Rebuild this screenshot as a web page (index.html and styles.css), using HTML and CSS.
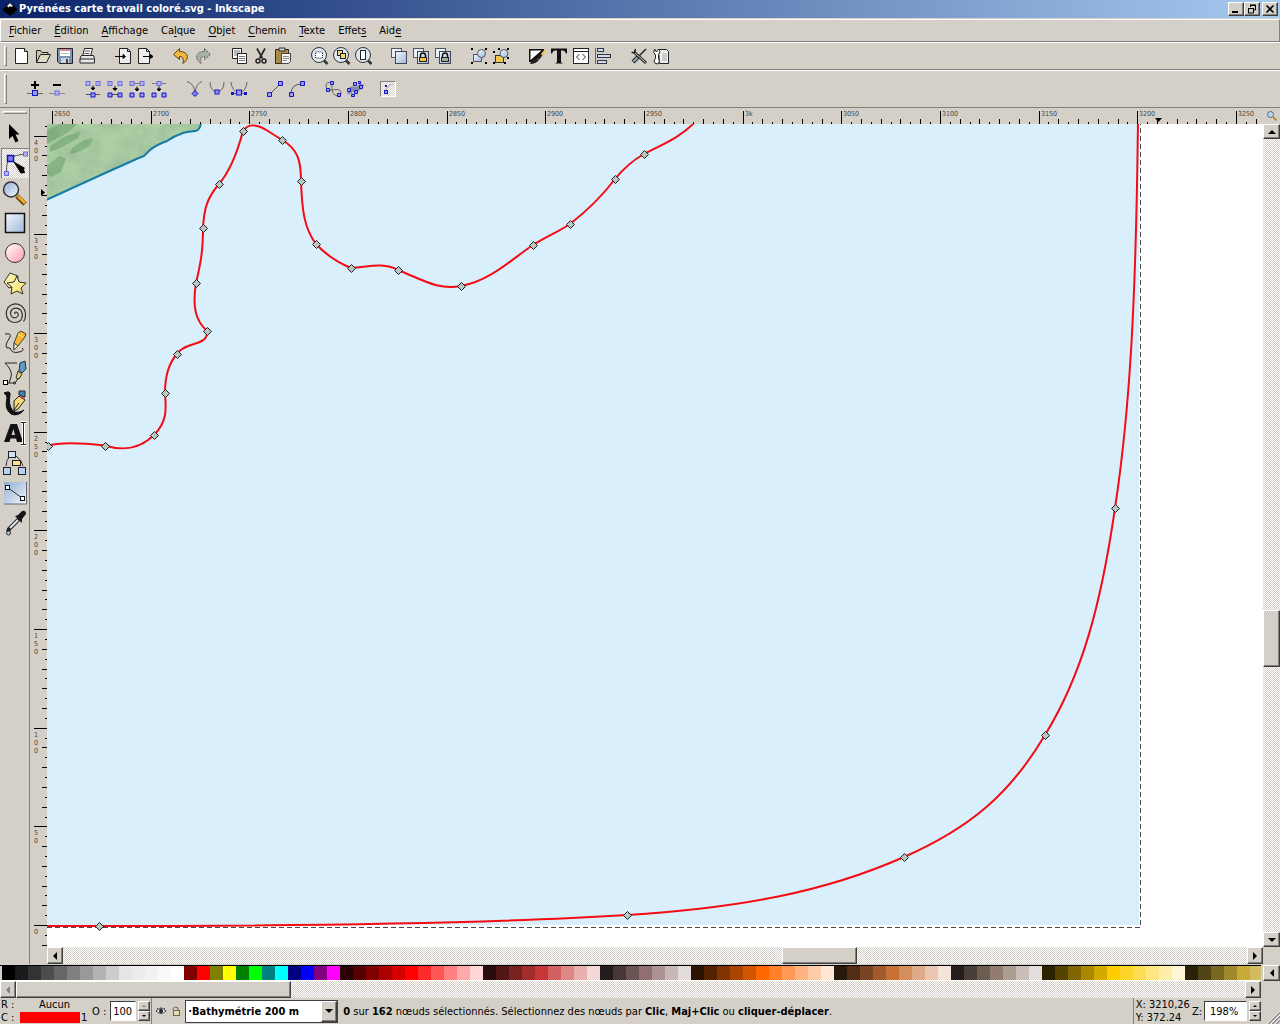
FILE: index.html
```html
<!DOCTYPE html>
<html lang="fr">
<head>
<meta charset="utf-8">
<title>Pyrénées carte travail coloré.svg - Inkscape</title>
<link rel="stylesheet" href="styles.css">
</head>
<body>
<svg class="defs" aria-hidden="true">
  <defs>
    <linearGradient id="blue" x1="0" y1="0" x2="1" y2="1"><stop offset="0" stop-color="#f4f8fd"/><stop offset="1" stop-color="#9db9da"/></linearGradient>
    <linearGradient id="steel" x1="0" y1="0" x2="1" y2="1"><stop offset="0" stop-color="#8faed4"/><stop offset="1" stop-color="#f4f8fd"/></linearGradient>
    <linearGradient id="pink" x1="0" y1="0" x2="1" y2="1"><stop offset="0" stop-color="#fff"/><stop offset="1" stop-color="#ff9bab"/></linearGradient>
    <linearGradient id="yellow" x1="0" y1="0" x2="1" y2="1"><stop offset="0" stop-color="#fffde0"/><stop offset="1" stop-color="#f5e04c"/></linearGradient>
    <g id="n"><rect x="-2.500" y="-2.500" width="5" height="5" fill="#9a9af0" stroke="#1414c8"/></g>
    <g id="nl"><rect x="-2" y="-2" width="4" height="4" fill="#b4b4ee" stroke="#6a6ae0"/></g>
    <g id="down"><path d="M0-2.500V1M-2 0L0 2L2 0Z" stroke="#000" fill="#000"/></g>
    <g id="lens"><circle cx="11" cy="10" r="7.500" fill="#dce8f5" stroke="#333"/><path d="M16 15.500l3.500 3.500" stroke="#333" stroke-width="2.500"/></g>
    <g id="lock"><path d="M9.500 13v-2.500a2.500 2.500 0 0 1 5 0V13" fill="none" stroke="#111" stroke-width="1.500"/></g>
    <g id="stack"><rect x="3.500" y="3.500" width="10" height="9" fill="#e8f0f8" stroke="#556"/><rect x="7.500" y="6.500" width="11" height="12" fill="url(#blue)" stroke="#445"/></g>
  </defs>
</svg>

<header class="titlebar">
  <svg class="logo" viewBox="0 0 16 16"><path d="M8 1L15 8Q16 10 12 10.500L13 12L10 13L8 15L6 13L3 12L4 10.500Q0 10 1 8Z" fill="#000"/><path d="M8 2L11 5L9 6L8 5L6.500 6.500L5 5Z" fill="#e8eef8"/></svg>
  <h1>Pyrénées carte travail coloré.svg - Inkscape</h1>
  <div class="window-buttons">
    <button class="raised" aria-label="Réduire"><svg viewBox="0 0 12 10"><path d="M2 8h6" stroke="#000" stroke-width="2"/></svg></button>
    <button class="raised" aria-label="Restaurer"><svg viewBox="0 0 12 10"><path d="M4 1h6M4 1.500h6M4.500 1v2M9.500 1v5H8M2 4.500h6M2.500 4v5h5V4" fill="none" stroke="#000" /></svg></button>
    <button class="raised close" aria-label="Fermer"><svg viewBox="0 0 12 10"><path d="M2.500 1.500l7 7M9.500 1.500l-7 7" stroke="#000" stroke-width="1.600"/></svg></button>
  </div>
</header>

<nav class="menubar">
  <button><u>F</u>ichier</button><button><u>É</u>dition</button><button><u>A</u>ffichage</button><button>Ca<u>l</u>que</button><button><u>O</u>bjet</button><button><u>C</u>hemin</button><button><u>T</u>exte</button><button>Effet<u>s</u></button><button>Aid<u>e</u></button>
</nav>

<div class="toolbar commands" role="toolbar" aria-label="Commandes">
  <div class="grip"></div>
  <div class="group">
    <button aria-label="Nouveau"><svg viewBox="0 0 22 22"><path d="M5.500 3.500h9l3 3v12h-12z" fill="#fff" stroke="#222"/><path d="M14.500 3.500v3h3" fill="#ddd" stroke="#222"/></svg></button>
    <button aria-label="Ouvrir"><svg viewBox="0 0 22 22"><path d="M4.500 17.500v-12h4l1.500 2h6v3" fill="#c8c8ac" stroke="#222"/><path d="M4.500 17.500l4-8h10l-4 8z" fill="#dcdcc4" stroke="#222"/></svg></button>
    <button aria-label="Enregistrer"><svg viewBox="0 0 22 22"><path d="M3.500 3.500h15v15h-13l-2-2z" fill="#7f96b0" stroke="#223"/><rect x="6" y="4" width="10" height="7" fill="#fff"/><path d="M6 5h10" stroke="#d88" stroke-width="2"/><path d="M7 8.500h8" stroke="#bbb"/><rect x="7" y="13" width="8" height="5" fill="#d0d4d8"/><rect x="12" y="14" width="2" height="4" fill="#445"/></svg></button>
    <button aria-label="Imprimer"><svg viewBox="0 0 22 22"><path d="M8.500 3.500h8l-2 8h-8z" fill="#fff" stroke="#222"/><path d="M9 6h5M8.500 8.500h5" stroke="#555"/><path d="M5.500 10.500h12l1 3v4.500h-14.500v-4.500z" fill="#e8e8e8" stroke="#222"/><path d="M4 14h14" stroke="#222"/></svg></button>
  </div>
  <div class="group">
    <button aria-label="Importer"><svg viewBox="0 0 22 22"><path d="M7.500 3.500h8l3 3v12h-11z" fill="#eee" stroke="#222"/><path d="M15.500 3.500v3h3" fill="none" stroke="#222"/><path d="M3 11.500h8M11 9.500l2.500 2l-2.500 2z" fill="#000" stroke="#000"/></svg></button>
    <button aria-label="Exporter"><svg viewBox="0 0 22 22"><path d="M4.500 3.500h8l3 3v12h-11z" fill="#eee" stroke="#222"/><path d="M12.500 3.500v3h3" fill="none" stroke="#222"/><path d="M9 11.500h8M16.500 9.500l2.500 2l-2.500 2z" fill="#000" stroke="#000"/></svg></button>
  </div>
  <div class="group">
    <button aria-label="Annuler"><svg viewBox="0 0 22 22"><path d="M9.500 3.500l-6 6l6 5v-3q5-.500 3.500 7q5-4 4.500-7q-1-5-8-5z" fill="#f0b93c" stroke="#5a4310"/></svg></button>
    <button aria-label="Rétablir"><svg viewBox="0 0 22 22"><path d="M12.500 3.500l6 6l-6 5v-3q-5-.500-3.500 7q-5-4-4.500-7q1-5 8-5z" fill="#a9b0a4" stroke="#5c6058" stroke-dasharray="2 1"/></svg></button>
  </div>
  <div class="group">
    <button aria-label="Copier"><svg viewBox="0 0 22 22"><path d="M4.500 3.500h9v10h-9z" fill="#fff" stroke="#222"/><path d="M6 6h6M6 8h6M6 10h3" stroke="#777"/><path d="M9.500 8.500h9v10h-9z" fill="#fff" stroke="#222"/><path d="M11 11.500h6M11 13.500h6M11 15.500h6" stroke="#777"/></svg></button>
    <button aria-label="Couper"><svg viewBox="0 0 22 22"><path d="M7 3.500l5.500 10M15 3.500l-5.500 10" stroke="#222" stroke-width="1.600"/><circle cx="8" cy="16" r="2" fill="none" stroke="#222" stroke-width="1.500"/><circle cx="14" cy="16" r="2" fill="none" stroke="#222" stroke-width="1.500"/></svg></button>
    <button aria-label="Coller"><svg viewBox="0 0 22 22"><path d="M3.500 4.500h13v14h-13z" fill="#a98b4a" stroke="#332a10"/><path d="M7 3h6v3H7z" fill="#ccc" stroke="#333"/><path d="M9.500 8.500h9v8l-2 2h-7z" fill="#f4f4f4" stroke="#444"/><path d="M11 11.500h6M11 13.500h6M11 15.500h4" stroke="#888"/></svg></button>
  </div>
  <div class="group">
    <button aria-label="Zoom sélection"><svg viewBox="0 0 22 22"><use href="#lens"/><rect x="7.500" y="7" width="7" height="6" fill="#fff" stroke="#222" stroke-dasharray="1 1"/></svg></button>
    <button aria-label="Zoom dessin"><svg viewBox="0 0 22 22"><use href="#lens"/><rect x="7.500" y="5.500" width="5" height="5" fill="#f9d974" stroke="#222"/><rect x="10.500" y="8.500" width="5" height="5" fill="#f9d974" stroke="#222"/></svg></button>
    <button aria-label="Zoom page"><svg viewBox="0 0 22 22"><use href="#lens"/><rect x="8.500" y="5.500" width="5" height="9" fill="#fff" stroke="#222"/></svg></button>
  </div>
  <div class="group">
    <button aria-label="Dupliquer"><svg viewBox="0 0 22 22"><use href="#stack"/></svg></button>
    <button aria-label="Cloner"><svg viewBox="0 0 22 22"><use href="#stack"/><use href="#lock" x="1"/><rect x="9.500" y="12.500" width="7" height="4" fill="#f2c230" stroke="#222"/></svg></button>
    <button aria-label="Délier le clone"><svg viewBox="0 0 22 22"><use href="#stack"/><use href="#lock" x="1"/><rect x="9.500" y="12.500" width="7" height="4" fill="#9fae8c" stroke="#222"/></svg></button>
  </div>
  <div class="group">
    <button aria-label="Grouper"><svg viewBox="0 0 22 22"><path d="M3 3h2v2H3zM17 3h2v2h-2zM3 17h2v2H3zM17 17h2v2h-2z"/><rect x="5.500" y="9.500" width="8" height="7" fill="url(#blue)" stroke="#556"/><circle cx="13.500" cy="8.500" r="4" fill="url(#blue)" stroke="#556"/></svg></button>
    <button aria-label="Dégrouper"><svg viewBox="0 0 22 22"><path d="M3 6h2v2H3zM8 3h2v2H8zM17 3h2v2h-2zM3 17h2v2H3zM17 12h2v2h-2zM14 17h2v2h-2z"/><rect x="5.500" y="10.500" width="8" height="7" fill="#f2c74a" stroke="#333"/><circle cx="14" cy="8.500" r="4" fill="url(#blue)" stroke="#556"/></svg></button>
  </div>
  <div class="group">
    <button aria-label="Remplissage et contour"><svg viewBox="0 0 22 22"><path d="M3 4h15v3L8 17H3z" fill="#111"/><path d="M4.500 5.500h11L4.500 15z" fill="#fff"/><path d="M4 19q2-5 6-5.500l3 1.500q-3 4-9 4z" fill="#222"/><path d="M11 13l6-7l2 1l-6 8z" fill="#222"/><path d="M15 9l4-5v4l-2 3z" fill="#e8c95e"/></svg></button>
    <button aria-label="Texte et police"><svg viewBox="0 0 22 22"><path d="M3 3.500h16v5h-1q-1-3-3-3h-2v11q0 1.500 2 2H7q2-.500 2-2v-11H7q-2 0-3 3H3z" fill="#111"/></svg></button>
    <button aria-label="Éditeur XML"><svg viewBox="0 0 22 22"><rect x="3.500" y="3.500" width="15" height="15" fill="#fff" stroke="#222"/><path d="M3.500 6.500h15" stroke="#222"/><path d="M9.500 9l-3 3l3 3M12.500 9l3 3l-3 3" fill="none" stroke="#333"/></svg></button>
    <button aria-label="Aligner et distribuer"><svg viewBox="0 0 22 22"><path d="M3.500 3v16" stroke="#e03030"/><rect x="5.500" y="3.500" width="6" height="3" fill="#cfe0f2" stroke="#334"/><rect x="5.500" y="9.500" width="13" height="3" fill="#cfe0f2" stroke="#334"/><rect x="5.500" y="15.500" width="9" height="3" fill="#cfe0f2" stroke="#334"/></svg></button>
  </div>
  <div class="group">
    <button aria-label="Préférences"><svg viewBox="0 0 22 22"><path d="M18 4L11 11" stroke="#222" stroke-width="1.500"/><path d="M10 12l-5 5" stroke="#222" stroke-width="4"/><path d="M9.500 12.500l-4 4" stroke="#9ab0c8" stroke-width="2"/><path d="M6 7l12 11" stroke="#222" stroke-width="3"/><path d="M6 7l11.500 10.500" stroke="#ddd"/><path d="M3.500 7.500h3l1-3.500" fill="none" stroke="#222" stroke-width="1.500"/></svg></button>
    <button aria-label="Propriétés du document"><svg viewBox="0 0 22 22"><path d="M8.500 4.500h8l2 2v12h-9z" fill="#eee" stroke="#222"/><path d="M12 9h5M12 11h5M12 13h5M12 15h5" stroke="#aaa"/><path d="M4.500 4l2 3l2-3q3 3 0 5.500v4q2 3-.500 5.500q-4 0-4-3l1.500-2.500V10Q2.500 8 4.500 4z" fill="#fff" stroke="#222"/></svg></button>
  </div>
</div>

<div class="toolbar nodes" role="toolbar" aria-label="Outil nœud">
  <div class="grip"></div>
  <div class="group">
    <button aria-label="Insérer un nœud"><svg viewBox="0 0 22 22"><path d="M3 15.500h16" stroke="#666"/><use href="#n" x="11" y="15"/><path d="M7 7h8M11 3v8" stroke="#000" stroke-width="2"/></svg></button>
    <button aria-label="Supprimer un nœud"><svg viewBox="0 0 22 22"><path d="M3 15.500h16" stroke="#888"/><use href="#nl" x="11" y="15"/><path d="M7 7h8" stroke="#000" stroke-width="2"/></svg></button>
  </div>
  <div class="group">
    <button aria-label="Joindre les nœuds"><svg viewBox="0 0 22 22"><path d="M4 16.500h14" stroke="#555"/><use href="#nl" x="6" y="5.500"/><use href="#nl" x="16" y="5.500"/><use href="#down" x="11" y="10"/><rect x="9" y="15" width="4" height="4" fill="#9a9af0" stroke="#1414c8"/></svg></button>
    <button aria-label="Joindre par un segment"><svg viewBox="0 0 22 22"><path d="M4 16.500h14" stroke="#555"/><use href="#nl" x="6" y="5.500"/><use href="#nl" x="16" y="5.500"/><use href="#down" x="11" y="10.500"/><path d="M4 15h4v4H4zM14 15h4v4h-4z" fill="#9a9af0" stroke="#1414c8"/></svg></button>
    <button aria-label="Supprimer un segment"><svg viewBox="0 0 22 22"><path d="M4 5.500h14" stroke="#777"/><use href="#nl" x="6" y="5.500"/><use href="#nl" x="16" y="5.500"/><use href="#down" x="11" y="11"/><path d="M4 15h4v4H4zM14 15h4v4h-4z" fill="#9a9af0" stroke="#1414c8"/></svg></button>
    <button aria-label="Briser le chemin"><svg viewBox="0 0 22 22"><path d="M4 5.500h14" stroke="#777"/><use href="#nl" x="11" y="5.500"/><use href="#down" x="11" y="11"/><path d="M4 15h4v4H4zM14 15h4v4h-4z" fill="#9a9af0" stroke="#1414c8"/></svg></button>
  </div>
  <div class="group">
    <button aria-label="Nœud dur"><svg viewBox="0 0 22 22"><path d="M3 3.500q7 2 8 11q1-9 7-11" fill="none" stroke="#666"/><path d="M11 12.500l3 3l-3 3l-3-3z" fill="#7a7af0" stroke="#1414c8"/></svg></button>
    <button aria-label="Nœud doux"><svg viewBox="0 0 22 22"><path d="M4 4q0 9 7 10q7-1 7-10" fill="none" stroke="#666"/><rect x="9" y="12" width="4" height="4" fill="#9a9af0" stroke="#1414c8"/></svg></button>
    <button aria-label="Nœud symétrique"><svg viewBox="0 0 22 22"><path d="M3 4q1 10 8 10.500q7-.500 8-10.500M4 15.500h14" fill="none" stroke="#666"/><rect x="3" y="14" width="3" height="3" fill="#1414c8"/><rect x="16" y="14" width="3" height="3" fill="#1414c8"/><use href="#n" x="11" y="14.500"/></svg></button>
  </div>
  <div class="group">
    <button aria-label="Segment droit"><svg viewBox="0 0 22 22"><path d="M6 16L16 6" stroke="#555"/><path d="M3.500 14.500h4v4h-4zM14.500 3.500h4v4h-4z" fill="#9a9af0" stroke="#1414c8"/></svg></button>
    <button aria-label="Segment courbe"><svg viewBox="0 0 22 22"><path d="M5 16Q5 6 16 6" fill="none" stroke="#555"/><path d="M3.500 14.500h4v4h-4zM14.500 3.500h4v4h-4z" fill="#9a9af0" stroke="#1414c8"/></svg></button>
  </div>
  <div class="group">
    <button aria-label="Objet en chemin"><svg viewBox="0 0 22 22"><path d="M10 5q-6-2-6 3t7 4q8-2 8 3t-6 2q-4-2-3-12" fill="none" stroke="#666"/><path d="M8.500 3.500h3v3h-3zM4.500 10.500h3v3h-3zM15.500 15.500h3v3h-3z" fill="#9a9af0" stroke="#1414c8"/></svg></button>
    <button aria-label="Contour en chemin"><svg viewBox="0 0 22 22"><path d="M6 16q-1-6 4-5t8-5" fill="none" stroke="#8a8aa8" stroke-width="5"/><path d="M9.500 4.500h3v3h-3zM15.500 7.500h3v3h-3zM3.500 10.500h3v3h-3zM10.500 12.500h3v3h-3zM7.500 16.500h3v2h-3zM14.500 3.500h2v2h-2z" fill="#9a9af0" stroke="#1414c8"/></svg></button>
  </div>
  <button class="show-handles" aria-pressed="true" aria-label="Afficher les poignées"><svg viewBox="0 0 14 14"><path d="M5 9q0-5 7-7" fill="none" stroke="#aaa"/><rect x="4" y="3" width="2" height="2" fill="#1414c8"/><rect x="3.500" y="8.500" width="3" height="3" fill="#9a9af0" stroke="#1414c8"/></svg></button>
</div>

<main class="workspace">
  <div class="toolbox" role="toolbar" aria-label="Outils">
    <div class="grip"></div>
    <button aria-label="Sélecteur"><svg viewBox="0 0 28 30"><path d="M8 6v15l3.500-3l3 6.500l3-1.500l-3-6.500h4z" fill="#000"/></svg></button>
    <button class="active" aria-pressed="true" aria-label="Nœuds"><svg viewBox="0 0 28 30"><path d="M5.500 25Q5 14 9 10Q14 7 24 6" fill="none" stroke="#555"/><use href="#nl" x="5.500" y="25.500"/><use href="#nl" x="24.500" y="6"/><rect x="6.500" y="7.500" width="6" height="6" fill="#8080f0" stroke="#1414b4" stroke-width="1.500"/><path d="M12 13l12 7l-1 1l1 4l-4 .500l-1-1z" fill="#000"/></svg></button>
    <button aria-label="Zoom"><svg viewBox="0 0 28 30"><path d="M16 18l8 8" stroke="#6b4a10" stroke-width="5"/><path d="M17 18l7 7" stroke="#f2a928" stroke-width="3"/><circle cx="10" cy="11.500" r="7.500" fill="url(#steel)" stroke="#333" stroke-width="1.500"/></svg></button>
    <button aria-label="Rectangle"><svg viewBox="0 0 28 30"><rect x="4.500" y="5.500" width="19" height="19" fill="url(#blue)" stroke="#111" stroke-width="1.500"/></svg></button>
    <button aria-label="Ellipse"><svg viewBox="0 0 28 30"><circle cx="14" cy="15" r="9.500" fill="url(#pink)" stroke="#333"/></svg></button>
    <button aria-label="Étoile"><svg viewBox="0 0 28 30"><path d="M9 5l8 3l-1 9l-8 3l-5-6z" fill="url(#yellow)" stroke="#333"/><path d="M16 8l2 6l7 1l-5 5l2 6l-6-3l-6 3l1-7l-5-4l7-1z" fill="url(#yellow)" stroke="#333"/></svg></button>
    <button aria-label="Spirale"><svg viewBox="0 0 28 30"><path d="M14 16q-1-2 1-2q3 1 2 4q-2 3-6 1q-3-4 0-7.500q5-3 9 1q3 5-.500 10q-5 4-11.500 0q-5-6-1-13q6-6 13-2q5 4 4.500 10q0 4-2 6" fill="none" stroke="#333" stroke-width="1.200"/></svg></button>
    <button aria-label="Crayon"><svg viewBox="0 0 28 30"><path d="M4 6q7-1 5 3q-4 6-4 9q0 3 4 2q2 6 9 4q6-1 3-4" fill="none" stroke="#222"/><path d="M13 15l4-10l3-2l5 3l-1 3l-7 9l-4 4z" fill="#f6b733" stroke="#443"/><path d="M13 15l4 3l-4 4z" fill="#fff4d0" stroke="#443"/><path d="M17 6l5 3" stroke="#fff4a0"/></svg></button>
    <button aria-label="Plume"><svg viewBox="0 0 28 30"><path d="M4 5h12M4 5q8 8 6 14l-2 6M5 25h9q4-4 3-8" fill="none" stroke="#222"/><path d="M19 5l5-2l1 8l-4 4l-3-2z" fill="#5b9ac4" stroke="#234"/><path d="M17 13l4 3l-3 5l-3-1z" fill="#e8cf70" stroke="#333"/><rect x="2.500" y="22.500" width="4" height="4" fill="#fff" stroke="#000"/><circle cx="13.500" cy="25" r="1" fill="#fff" stroke="#000"/></svg></button>
    <button aria-label="Calligraphie"><svg viewBox="0 0 28 30"><path d="M3 5q7-3 6 2q-2 10 3 16q5 3 11-1q-6 7-13 4Q3 21 6 10Q6 7 3 5z" fill="#111" stroke="#111"/><path d="M13 13l5-5l6 4l-7 9l-4 2z" fill="#f8d878" stroke="#222"/><path d="M18 3h6v6l-6-2z" fill="#4387ac" stroke="#223"/><path d="M18 7.500l6 3" stroke="#d33"/><path d="M13 22l5-7" stroke="#222"/></svg></button>
    <button aria-label="Texte"><svg viewBox="0 0 28 30"><path d="M3 24L9.500 6H16l6 18h-6l-1-3.500H9.500L8.500 24zM10.500 17h3.500l-1.500-6z" fill="#111" fill-rule="evenodd"/><path d="M20 4.500h5M20 26.500h5M22.500 4v22" stroke="#fff" stroke-width="3"/><path d="M20 4.500h5M20 26.500h5M22.500 4v22" stroke="#222"/></svg></button>
    <button aria-label="Connecteur"><svg viewBox="0 0 28 30"><path d="M9 8q-4 4-4 10M15 8q6 4 7 10" fill="none" stroke="#333"/><rect x="7.500" y="3.500" width="7" height="6" fill="#cfe2f8" stroke="#222"/><rect x="11.500" y="12.500" width="8" height="5" fill="#fde08a" stroke="#222"/><rect x="2.500" y="19.500" width="7" height="7" fill="#b5d2f2" stroke="#222"/><rect x="17.500" y="19.500" width="7" height="7" fill="#b5d2f2" stroke="#222"/></svg></button>
    <button aria-label="Dégradé"><svg viewBox="0 0 28 30"><rect x="3" y="4" width="23" height="22" fill="url(#steel)"/><path d="M25.500 4v22H3" fill="none" stroke="#667"/><path d="M6 9l15 11" stroke="#333"/><rect x="4.500" y="7.500" width="4" height="4" fill="#fff" stroke="#111"/><rect x="19.500" y="18.500" width="4" height="4" fill="#fff" stroke="#111"/></svg></button>
    <button aria-label="Pipette"><svg viewBox="0 0 28 30"><path d="M18 11L8 21l-1 3" fill="none" stroke="#222" stroke-width="4"/><path d="M17 12L9 20" stroke="#dfe8f0" stroke-width="2"/><path d="M14 8l3-1l4-4q4-1 4 3l-4 5l0 4z" fill="#151515"/><circle cx="7.500" cy="25" r="2" fill="#adc3d6" stroke="#333"/></svg></button>
  </div>

  <div class="view">
    <svg class="ruler top" id="ruler-x" aria-hidden="true"></svg>
    <button class="zoom-corner" aria-label="Zoom automatique"><svg viewBox="0 0 12 12"><circle cx="4.500" cy="4.500" r="3" fill="#b9d4f2" stroke="#667"/><path d="M7 7l3.500 3.500" stroke="#b8923a" stroke-width="2"/></svg></button>
    <svg class="ruler left" id="ruler-y" aria-hidden="true"></svg>
    <svg class="canvas" role="img" aria-label="Carte des Pyrénées">
      <defs>
        <filter id="relief" x="0" y="0" width="1" height="1"><feTurbulence type="fractalNoise" baseFrequency=".05 .07" numOctaves="3" seed="4"/><feColorMatrix values="0 0 0 0 .34  0 0 0 0 .52  0 0 0 0 .34  2.200 0 0 0 -.720"/></filter>
        <clipPath id="coast"><path d="M46 124H201Q199 131 195 131Q186 132 183 133Q174 136 167 141Q156 145 150 150L144 156Q138 158 132 161L103 174L46 200Z"/></clipPath>
      </defs>
      <g transform="translate(-47 -124)">
        <rect x="47" y="124" width="1092" height="801" fill="#daeffc"/>
        <g clip-path="url(#coast)">
          <rect x="47" y="124" width="156" height="78" fill="#abcfa3"/>
          <rect x="47" y="124" width="156" height="78" filter="url(#relief)"/>
          <path d="M47 130l12-6h18l-8 8-22 12zM50 146l16-10 14-4-2 6-14 8-14 6zM72 148l12-8 9-2-3 8-12 6-8 2zM47 166l12-10 7 2-5 14-10 5-4-3z" fill="#649c64" opacity=".5"/>
        </g>
        <path d="M201 124Q199 131 195 131Q186 132 183 133Q174 136 167 141Q156 145 150 150L144 156Q138 158 132 161L103 174L46 200" fill="none" stroke="#157ba6" stroke-width="2"/>
        <path d="M1140.500 120V927.500M1140 927.500H40" fill="none" stroke="#4a4a4a" stroke-dasharray="5 3"/>
        <g fill="none" stroke="#f40c12" stroke-width="2">
          <path d="M47 446Q62 441 105 445.500C122 451 140 449 154 435C168 421 166 408 165 393C165 380 168 364 177 354C184 342 207 346 207 333L207 331C196 321 192 308 196 283C201 262 203 250 203 228C204 209 207 198 219 184C230 171 238 150 243 131C250 121 262 127 268 131L282 140C298 149 301 161 301 181C302 210 304 228 316 244Q331 260 351 268C368 267 383 262 398 270C425 281 438 290 461 286C490 281 512 259 533 245C544 238 558 232 570 224Q597 203 615 179Q628 163 644 154C661 145 680 138 695 122"/>
          <path d="M40 926L99 926C300 926 500 923 627 915C740 908 825 892 904 857C970 828 1010 794 1045 735C1082 675 1101 605 1115 508C1130 410 1136 300 1138 120"/>
        </g>
        <g id="path-nodes" fill="#bcc4c0" stroke="#222"></g>
      </g>
    </svg>
    <div class="scroll vertical">
      <button class="raised" aria-label="Défiler vers le haut"><i class="arrow up"></i></button>
      <div class="before"></div><div class="thumb raised"></div><div class="after"></div>
      <button class="raised" aria-label="Défiler vers le bas"><i class="arrow down"></i></button>
    </div>
    <div class="scroll horizontal">
      <button class="raised" aria-label="Défiler à gauche"><i class="arrow prev"></i></button>
      <div class="before"></div><div class="thumb raised"></div><div class="after"></div>
      <button class="raised" aria-label="Défiler à droite"><i class="arrow next"></i></button>
    </div>
  </div>
</main>

<section class="palette" aria-label="Palette">
  <div class="palette-main">
    <div class="swatches" id="swatches"></div>
    <div class="scroll palette-scroll">
      <button class="raised" disabled aria-label="Couleurs précédentes"><i class="arrow prev"></i></button>
      <div class="thumb raised"></div><div class="after"></div>
      <button class="raised" aria-label="Couleurs suivantes"><i class="arrow next"></i></button>
    </div>
  </div>
  <button class="raised palette-menu" aria-label="Choisir une palette"><i class="arrow prev"></i></button>
</section>

<footer class="statusbar">
  <div class="style-info">
    <span>R :</span><span class="fill">Aucun</span><span></span>
    <span>C :</span><span class="stroke"></span><span>1</span>
  </div>
  <label for="opacity">O :</label>
  <div class="spin opacity">
    <input id="opacity" type="text" value="100">
    <div class="steps"><button class="raised" disabled aria-label="Augmenter l’opacité"><i class="arrow up"></i></button><button class="raised" aria-label="Diminuer l’opacité"><i class="arrow down"></i></button></div>
  </div>
  <div class="layer">
    <button aria-label="Visibilité du calque"><svg viewBox="0 0 12 12"><path d="M1 6q5-5 10 0q-5 5-10 0z" fill="#eee" stroke="#444"/><circle cx="6" cy="6" r="2" fill="#222"/><path d="M2 3l1 1M6 2v1M10 3l-1 1" stroke="#444"/></svg></button>
    <button aria-label="Verrouillage du calque"><svg viewBox="0 0 12 12"><path d="M3 5V3.500q2-3 5-.500V6" fill="none" stroke="#665" /><rect x="3.500" y="5.500" width="6" height="5" fill="#e8dca8" stroke="#665"/></svg></button>
    <div class="combo">
      <select aria-label="Calque courant"><option>·Bathymétrie 200 m</option></select>
      <span class="raised"><i class="arrow down"></i></span>
    </div>
  </div>
  <p class="message"><b>0</b> sur <b>162</b> nœuds sélectionnés. Sélectionnez des nœuds par <b>Clic</b>, <b>Maj+Clic</b> ou <b>cliquer-déplacer</b>.</p>
  <div class="coords"><span>X: 3210,26</span><span>Y: 372.24</span></div>
  <label for="zoom">Z:</label>
  <div class="spin zoom">
    <input id="zoom" type="text" value="198%">
    <div class="steps"><button class="raised" aria-label="Zoom avant"><i class="arrow up"></i></button><button class="raised" aria-label="Zoom arrière"><i class="arrow down"></i></button></div>
  </div>
  <svg class="resize" viewBox="0 0 14 14" aria-hidden="true"><path d="M2 14L14 2M6 14l8-8M10 14l4-4" stroke="#808080" stroke-width="1.500"/><path d="M1 14L14 1M5 14l9-9M9 14l5-5" stroke="#fff" stroke-width=".8"/></svg>
</footer>
<script src="app.js"></script>
</body>
</html>
```

FILE: styles.css
```css
* { box-sizing: border-box; }

body {
  margin: 0;
  min-height: 100vh;
  display: flex;
  flex-direction: column;
  overflow: hidden;
  background: #d4d0c8;
  color: #000;
  font: 11px/13px "DejaVu Sans Condensed", "DejaVu Sans", sans-serif;
}

button, input, select {
  margin: 0;
  padding: 0;
  border: 0;
  background: none;
  color: inherit;
  font: inherit;
}

svg { display: block; }
.defs { position: absolute; width: 0; height: 0; }

.raised {
  display: flex;
  align-items: center;
  justify-content: center;
  background: #d4d0c8;
  border: 1px solid;
  border-color: #fff #404040 #404040 #fff;
  box-shadow: inset -1px -1px #808080;
}

.arrow { border: 4px solid transparent; }
.arrow.up { border-top: 0; border-bottom-color: #000; }
.arrow.down { border-bottom: 0; border-top-color: #000; }
.arrow.prev { border-left: 0; border-right-color: #000; }
.arrow.next { border-right: 0; border-left-color: #000; }
:disabled .arrow.up { border-bottom-color: #808080; }
:disabled .arrow.prev { border-right-color: #808080; }

/* Title bar */
.titlebar {
  display: flex;
  align-items: center;
  height: 18px;
  padding: 0 2px;
  background: linear-gradient(90deg, #0a246a, #a6caf0);
  color: #fff;
}
.logo { width: 16px; height: 16px; }
.titlebar h1 { flex: 1; margin: 0 0 0 1px; font-size: 11px; line-height: 18px; }
.window-buttons { display: flex; }
.window-buttons button { width: 16px; height: 14px; }
.window-buttons svg { width: 12px; height: 10px; }
.window-buttons .close { margin-left: 2px; }

/* Menu */
.menubar {
  display: flex;
  gap: 13px;
  height: 23px;
  margin-top: 1px;
  padding: 0 8px;
  border: 1px solid;
  border-color: #fff #808080 #808080 #fff;
}
.menubar u { text-underline-offset: 2px; }

/* Toolbars */
.toolbar {
  display: flex;
  align-items: center;
  gap: 14px;
  border-top: 1px solid #fff;
  border-bottom: 1px solid #808080;
}
.toolbar .grip {
  width: 3px;
  align-self: stretch;
  margin: 3px 0;
  border: 1px solid;
  border-color: #fff #808080 #808080 #fff;
}
.group { display: flex; }
.group button, .group svg { width: 22px; height: 22px; }
.commands { height: 28px; padding-left: 4px; }
.commands .grip { margin-right: -11px; }
.nodes { height: 38px; padding-left: 4px; }
.nodes .grip { margin-right: 3px; }
.show-handles {
  width: 16px;
  height: 16px;
  border: 1px solid;
  border-color: #808080 #fff #fff #808080;
}
.show-handles svg { width: 14px; height: 14px; }
.show-handles, .scroll, .toolbox .active {
  background: repeating-conic-gradient(#fff 0 25%, #d4d0c8 0 50%) 0 0 / 2px 2px;
}

/* Toolbox, rulers and canvas */
.workspace { flex: 1; display: flex; }
.toolbox { width: 30px; padding: 3px 0 0 1px; border-right: 1px solid #808080; }
.toolbox .grip {
  height: 3px;
  margin: 0 2px 4px;
  border: 1px solid;
  border-color: #fff #808080 #808080 #fff;
}
.toolbox button { display: block; width: 28px; height: 30px; }
.toolbox .active { box-shadow: inset 1px 1px #808080; }
.toolbox svg { width: 28px; height: 30px; }

.view {
  flex: 1;
  display: grid;
  grid-template-columns: 17px minmax(0, 1fr) 17px;
  grid-template-rows: 16px minmax(0, 1fr) 17px;
}
.ruler { width: 100%; height: 100%; }
.ruler text { fill: #444; font-size: 7px; }
.ruler path { stroke: #000; fill: none; }
.ruler .marker { fill: #000; stroke: none; }
.ruler.top { grid-area: 1 / 2; }
.ruler.left { grid-area: 2 / 1; }
.zoom-corner { grid-area: 1 / 3; display: grid; place-items: center; }
.zoom-corner svg { width: 12px; height: 12px; }
.canvas { grid-area: 2 / 2; width: 100%; height: 100%; background: #fff; }

.scroll { display: flex; }
.vertical { grid-area: 2 / 3; flex-direction: column; }
.vertical button { height: 15px; }
.vertical .before { flex: 472; }
.vertical .thumb { height: 57px; }
.vertical .after { flex: 265; }
.horizontal { grid-area: 3 / 2; }
.horizontal button { width: 16px; }
.horizontal .before { flex: 720; }
.horizontal .thumb { width: 75px; }
.horizontal .after { flex: 390; }

/* Palette */
.palette { display: flex; align-items: flex-start; gap: 2px; margin-top: 1px; }
.palette-main { flex: 1; min-width: 0; }
.palette-menu { width: 17px; height: 16px; }
.swatches {
  display: flex;
  height: 16px;
  padding: 0 1px 0 2px;
  overflow: hidden;
  border: solid #fff;
  border-width: 0 0 1px;
  border-top: 1px solid #000;
}
.swatches span { flex: none; width: 13px; }
.palette-scroll { height: 17px; }
.palette-scroll button { width: 16px; }
.palette-scroll .thumb { width: 275px; }
.palette-scroll .after { flex: 1; }

/* Status bar */
.statusbar { display: flex; align-items: center; height: 26px; }
.style-info {
  display: grid;
  grid-template-columns: 18px 60px 10px;
  column-gap: 1px;
  width: 92px;
  padding-left: 1px;
}
.style-info .fill { padding-left: 19px; }
.style-info .stroke { height: 11px; margin-top: 1px; background: #f00; }
.spin { display: flex; height: 20px; gap: 2px; }
.spin input {
  min-width: 0;
  padding: 0 2px;
  background: #fff;
  border: 1px solid;
  border-color: #404040 #fff #fff #404040;
}
.steps { display: flex; flex-direction: column; width: 12px; }
.steps button { flex: 1; }
.steps .arrow { border-width: 2px; }
.steps .arrow.up { border-top: 0; }
.steps .arrow.down { border-bottom: 0; }
.opacity { margin-left: 4px; }
.opacity input { width: 26px; }
.layer {
  display: flex;
  align-items: center;
  gap: 3px;
  height: 26px;
  margin-left: 1px;
  padding-left: 3px;
  border-left: 1px solid #808080;
}
.layer svg { width: 12px; height: 12px; }
.combo {
  display: flex;
  width: 153px;
  height: 23px;
  background: #fff;
  border: 1px solid #404040;
}
.combo select { flex: 1; min-width: 0; appearance: none; padding-left: 2px; font-weight: bold; }
.combo .raised { width: 16px; }
.message { flex: 1; margin: 0 0 0 5px; white-space: nowrap; }
.coords {
  display: flex;
  flex-direction: column;
  padding: 0 2px;
  border-left: 1px solid #808080;
  white-space: nowrap;
}
.zoom { margin-left: 2px; }
.zoom input { width: 43px; padding-left: 5px; }
.resize { align-self: flex-end; width: 14px; height: 14px; margin-left: 5px; }
```

FILE: app.js
```js
const SVG = "http://www.w3.org/2000/svg";

function add(parent, tag, attrs, text) {
  const el = document.createElementNS(SVG, tag);
  for (const key in attrs) el.setAttribute(key, attrs[key]);
  if (text !== undefined) el.textContent = text;
  parent.appendChild(el);
}

// One major division is 50 document units.
const STEP = 98.67;
const tickLength = i => (i % 10 === 0 ? 13 : i % 2 === 0 ? 5 : 2);

function drawRulers() {
  const rx = document.getElementById("ruler-x");
  const width = rx.getBoundingClientRect().width;
  rx.replaceChildren();
  let ticks = "";
  for (let i = 0; 5.4 + i * STEP / 10 < width; i++) {
    const x = Math.floor(5.4 + i * STEP / 10) + 0.5;
    ticks += `M${x} 16v-${tickLength(i)}`;
    if (i % 10 === 0 && x + 20 < width) {
      const value = 2650 + i * 5;
      add(rx, "text", { x: x + 1.5, y: 8 }, value === 3000 ? "3k" : value);
    }
  }
  add(rx, "path", { d: ticks });
  add(rx, "path", { class: "marker", d: "M1108 10h7l-3.500 4z" });

  const ry = document.getElementById("ruler-y");
  ry.replaceChildren();
  ticks = "";
  for (let i = -2; i < 82; i++) {
    const y = Math.floor(801.6 - i * STEP / 10) + 0.5;
    ticks += `M17 ${y}h-${tickLength(i)}`;
    if (i % 10 === 0) {
      [...String(i * 5)].forEach((digit, n) => add(ry, "text", { x: 4, y: y + 8 + n * 8 }, digit));
    }
  }
  add(ry, "path", { d: ticks });
  add(ry, "path", { class: "marker", d: "M11 65v7l4-3.500z" });
}
drawRulers();
addEventListener("resize", drawRulers);

const nodes = [
  [48, 446], [105, 446], [154, 435], [165, 393], [177, 354], [207, 331], [196, 283],
  [203, 228], [219, 184], [243, 131], [282, 140], [301, 181], [316, 244], [351, 268],
  [398, 270], [461, 286], [533, 245], [570, 224], [615, 179], [644, 154],
  [99, 926], [627, 915], [904, 857], [1045, 735], [1115, 508]
];
for (const [x, y] of nodes) {
  add(document.getElementById("path-nodes"), "path", { d: `M${x + 0.5} ${y - 3.5}l4 4l-4 4l-4-4z` });
}

const colours = `000 1a1a1a 333 4d4d4d 666 808080 999 b3b3b3 ccc e6e6e6 ececec f2f2f2 f9f9f9 fff
800000 f00 808000 ff0 008000 0f0 008080 0ff 000080 00f 800080 f0f
2b0000 500 800000 a00 d40000 f00 ff2a2a f55 ff8080 faa ffd5d5
280b0b 501616 782121 a02c2c c83737 d35f5f de8787 e9afaf f4d7d7
241c1c 483737 6c5353 916f6f ac9393 c8b7b7 e3dbdb
2b1100 520 803300 a40 d45500 f60 ff7f2a f95 ffb380 fca ffe6d5
28170b 502d16 784421 a05a2c c87137 d38d5f deaa87 e9c6af f4e3d7
241f1c 483e37 6c5d53 917c6f ac9d93 c8beb7 e3dedb
2b2200 540 806600 a80 d4aa00 fc0 ffd42a fd5 ffe680 fea fff6d5
28220b 504416 786721 a0892c c8ab37 d3bc5f`.split(/\s+/);
for (const colour of colours) {
  const swatch = document.createElement("span");
  swatch.style.backgroundColor = "#" + colour;
  document.getElementById("swatches").appendChild(swatch);
}
```
